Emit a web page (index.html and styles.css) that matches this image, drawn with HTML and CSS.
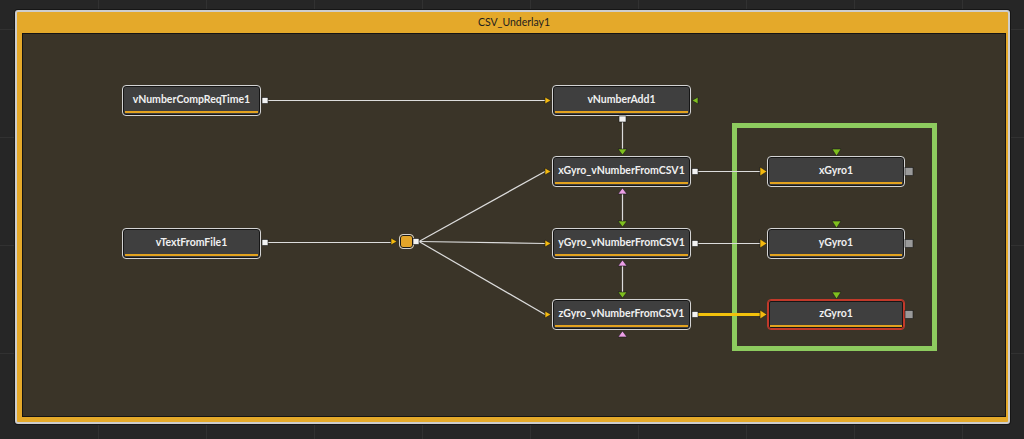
FILE: index.html
```html
<html>
   <head>
      <link rel="stylesheet" href="styles.css">
   </head>
   <body>
      <div class="underlay">
         <div class="underlayTitle">CSV_Underlay1</div>
         <div class="flowCanvas">
            <div class="selectFrame"></div>

            <div class="node compReq"><span>vNumberCompReqTime1</span></div>
            <div class="node textFile"><span>vTextFromFile1</span></div>
            <div class="node numAdd"><span>vNumberAdd1</span></div>
            <div class="node xCsv"><span>xGyro_vNumberFromCSV1</span></div>
            <div class="node yCsv"><span>yGyro_vNumberFromCSV1</span></div>
            <div class="node zCsv"><span>zGyro_vNumberFromCSV1</span></div>
            <div class="node gyro xGyro"><span>xGyro1</span></div>
            <div class="node gyro yGyro"><span>yGyro1</span></div>
            <div class="node gyro zGyro active"><span>zGyro1</span></div>
            <div class="router"></div>

            <!-- wires and ports, drawn in page coordinates -->
            <svg class="wires" width="982" height="382" viewBox="23 34 982 382">
               <g class="wire">
                  <path d="M267 100.5 H545"/>
                  <path d="M622.5 122 V149"/>
                  <path d="M698 171.5 H760"/>
                  <path d="M698 243.5 H760"/>
                  <path d="M267 242.5 H391"/>
                  <path d="M419 241.5 L545 171.5"/>
                  <path d="M419 241.5 L545 243.5"/>
                  <path d="M419 241.5 L545 314.5"/>
                  <path d="M622.5 194 V221"/>
                  <path d="M622.5 266 V292"/>
               </g>
               <path class="wireHot" d="M698 314.5 H760"/>

               <g class="portOut">
                  <rect x="262" y="97.5" width="6" height="6"/>
                  <rect x="262" y="239.5" width="6" height="6"/>
                  <rect x="619" y="116" width="7" height="6"/>
                  <rect x="692" y="168.5" width="6" height="6"/>
                  <rect x="692" y="240.5" width="6" height="6"/>
                  <rect x="692" y="311.5" width="6" height="6"/>
                  <rect x="413" y="238.5" width="6" height="6"/>
               </g>
               <g class="portIdle">
                  <rect x="905" y="167.5" width="8" height="8"/>
                  <rect x="905" y="239.5" width="8" height="8"/>
                  <rect x="905" y="310.5" width="8" height="8"/>
               </g>

               <g class="portIn">
                  <polygon points="545,97 551,100.5 545,104"/>
                  <polygon points="545,168 551,171.5 545,175"/>
                  <polygon points="545,240 551,243.5 545,247"/>
                  <polygon points="545,311 551,314.5 545,318"/>
                  <polygon points="391,238 397,241.5 391,245"/>
                  <polygon points="760,167 767,171.5 760,176"/>
                  <polygon points="760,239 767,243.5 760,248"/>
                  <polygon points="760,310 767,314.5 760,319"/>
               </g>
               <g class="portGreen">
                  <polygon points="698,97 692,100.5 698,104"/>
                  <polygon points="618,149 627,149 622.5,155"/>
                  <polygon points="618,221 627,221 622.5,227"/>
                  <polygon points="618,292 627,292 622.5,298"/>
                  <polygon points="832,149 841,149 836.5,156"/>
                  <polygon points="832,221 841,221 836.5,228"/>
                  <polygon points="832,292 841,292 836.5,299"/>
               </g>
               <g class="portPink">
                  <polygon points="618,194 627,194 622.5,188"/>
                  <polygon points="618,266 627,266 622.5,260"/>
                  <polygon points="618,337 627,337 622.5,331"/>
               </g>
            </svg>
         </div>
      </div>
   </body>
</html>
```

FILE: styles.css
```css
body {
margin: 0;
padding: 10px 14px 0 15px;
height: 439px;
box-sizing: border-box;
overflow: hidden;
background-color: #262626;
background-image: linear-gradient(to right, #313131 1px, transparent 1px), linear-gradient(to bottom, #313131 1px, transparent 1px);
background-size: 108px 108px;
background-position: 98px 29px;
font-family: Lato, "Open Sans", sans-serif;
}
.underlay {
border: 2px solid #cdcdcd;
border-radius: 3px;
padding: 0 2px 5px 5px;
background: #e4a92a;
box-shadow: 0 0 0 1px #161616;
}
.underlayTitle {
height: 21px;
line-height: 21px;
text-align: center;
font-size: 10.5px;
color: #1e1e1e;
}
.flowCanvas {
position: relative;
height: 382px;
background: #3a3428;
border: 1px solid #141414;
}
.wires {
position: absolute;
left: 0;
top: 0;
pointer-events: none;
}
.wire path {
stroke: #dcdcdc;
stroke-width: 1.2;
fill: none;
}
.wireHot {
stroke: #f2c10c;
stroke-width: 3;
fill: none;
}
.portOut rect {
fill: #f2f2f2;
stroke: #1a1a1a;
stroke-width: 0.6;
}
.portIdle rect {
fill: #9a9a9a;
stroke: #1a1a1a;
stroke-width: 0.6;
}
.portIn polygon {
fill: #f4b90f;
stroke: #1a1a1a;
stroke-width: 0.6;
}
.portGreen polygon {
fill: #7fbf1f;
stroke: #1a1a1a;
stroke-width: 0.6;
}
.portPink polygon {
fill: #ec9fe6;
stroke: #1a1a1a;
stroke-width: 0.6;
}
.node {
position: absolute;
width: 139px;
height: 31px;
box-sizing: border-box;
border: 1px solid #d4d4d4;
border-radius: 4px;
background: #3f3f3f;
box-shadow: inset 0 0 0 1px #161616;
color: #f0f0f0;
font-size: 10.5px;
font-weight: 700;
display: flex;
justify-content: center;
padding-top: 7px;
}
.node::after {
content: "";
position: absolute;
left: 2px;
right: 2px;
bottom: 2px;
height: 2px;
background: #e2a21f;
}
.node.gyro {
width: 138px;
}
.node.active {
border-color: #c2392a;
box-shadow: inset 0 0 0 1px #c2392a, inset 0 0 0 2px #161616;
}
.compReq { left: 99px; top: 51px; }
.textFile { left: 99px; top: 194px; }
.numAdd { left: 529px; top: 51px; }
.xCsv { left: 529px; top: 122px; }
.yCsv { left: 529px; top: 194px; }
.zCsv { left: 529px; top: 265px; }
.xGyro { left: 744px; top: 122px; }
.yGyro { left: 744px; top: 194px; }
.zGyro { left: 744px; top: 265px; }
.router {
position: absolute;
left: 376px;
top: 200px;
width: 15px;
height: 15px;
box-sizing: border-box;
border: 1px solid #d0d0d0;
border-radius: 4px;
background: #e3a52a;
box-shadow: inset 0 0 0 1px #1a1a1a;
}
.selectFrame {
position: absolute;
left: 709px;
top: 89px;
width: 205px;
height: 228px;
box-sizing: border-box;
border: 5px solid #8dcb5f;
}
```
